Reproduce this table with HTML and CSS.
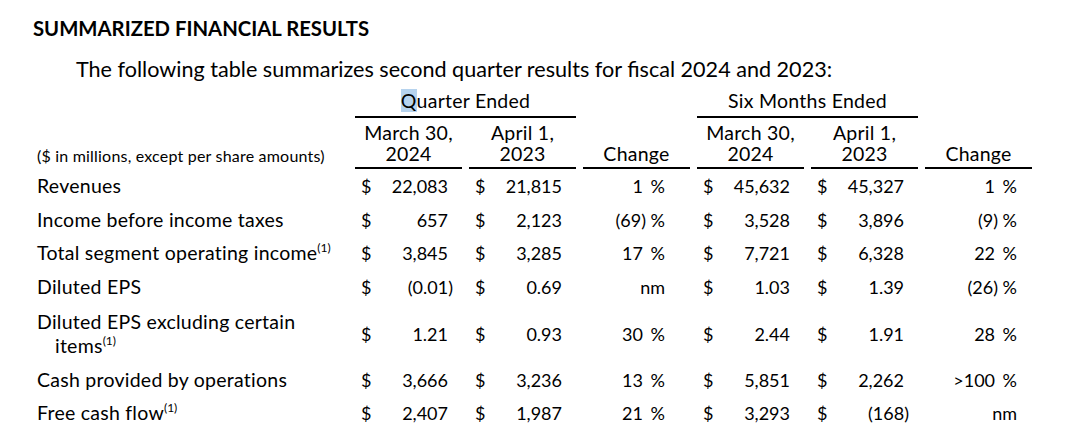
FILE: index.html
```html
<!DOCTYPE html>
<html lang="en">
<head>
<meta charset="utf-8">
<title>Summarized Financial Results</title>
<link rel="stylesheet" href="styles.css">
</head>
<body>
<div class="page">
  <h1 class="title">SUMMARIZED FINANCIAL RESULTS</h1>
  <p class="intro">The following table summarizes second quarter results for fiscal 2024 and 2023:</p>
  <table class="fin">
    <colgroup>
      <col class="c-label">
      <col class="c-data"><col class="c-data"><col class="c-data">
      <col class="c-data"><col class="c-data"><col class="c-data">
    </colgroup>
    <thead>
      <tr class="grp">
        <th></th>
        <th colspan="2" class="g"><span class="sel">Q</span>uarter Ended</th>
        <th></th>
        <th colspan="2" class="g">Six Months Ended</th>
        <th></th>
      </tr>
      <tr class="hd">
        <th class="unit">($ in millions, except per share amounts)</th>
        <th class="h">March 30,<br>2024</th>
        <th class="h">April 1,<br>2023</th>
        <th class="h">Change</th>
        <th class="h">March 30,<br>2024</th>
        <th class="h">April 1,<br>2023</th>
        <th class="h">Change</th>
      </tr>
    </thead>
    <tbody>
      <tr class="r34">
        <td class="lbl">Revenues</td>
        <td><div class="amt"><span>$</span><span>22,083</span></div></td>
        <td><div class="amt"><span>$</span><span>21,815</span></div></td>
        <td class="chg q"><span>1</span><span class="pct">%</span></td>
        <td><div class="amt"><span>$</span><span>45,632</span></div></td>
        <td><div class="amt"><span>$</span><span>45,327</span></div></td>
        <td class="chg s"><span>1</span><span class="pct">%</span></td>
      </tr>
      <tr class="r33">
        <td class="lbl">Income before income taxes</td>
        <td><div class="amt"><span>$</span><span>657</span></div></td>
        <td><div class="amt"><span>$</span><span>2,123</span></div></td>
        <td class="chg q"><span>(69<span class="cp">)</span></span><span class="pct">%</span></td>
        <td><div class="amt"><span>$</span><span>3,528</span></div></td>
        <td><div class="amt"><span>$</span><span>3,896</span></div></td>
        <td class="chg s"><span>(9<span class="cp">)</span></span><span class="pct">%</span></td>
      </tr>
      <tr class="r34">
        <td class="lbl">Total segment operating income<sup class="fn">(1)</sup></td>
        <td><div class="amt"><span>$</span><span>3,845</span></div></td>
        <td><div class="amt"><span>$</span><span>3,285</span></div></td>
        <td class="chg q"><span>17</span><span class="pct">%</span></td>
        <td><div class="amt"><span>$</span><span>7,721</span></div></td>
        <td><div class="amt"><span>$</span><span>6,328</span></div></td>
        <td class="chg s"><span>22</span><span class="pct">%</span></td>
      </tr>
      <tr class="r33">
        <td class="lbl">Diluted EPS</td>
        <td><div class="amt"><span>$</span><span>(0.01<span class="cp">)</span></span></div></td>
        <td><div class="amt"><span>$</span><span>0.69</span></div></td>
        <td class="chg q"><span>nm</span></td>
        <td><div class="amt"><span>$</span><span>1.03</span></div></td>
        <td><div class="amt"><span>$</span><span>1.39</span></div></td>
        <td class="chg s"><span>(26<span class="cp">)</span></span><span class="pct">%</span></td>
      </tr>
      <tr class="r61">
        <td class="lbl two">Diluted EPS excluding certain<br>items<sup class="fn">(1)</sup></td>
        <td><div class="amt"><span>$</span><span>1.21</span></div></td>
        <td><div class="amt"><span>$</span><span>0.93</span></div></td>
        <td class="chg q"><span>30</span><span class="pct">%</span></td>
        <td><div class="amt"><span>$</span><span>2.44</span></div></td>
        <td><div class="amt"><span>$</span><span>1.91</span></div></td>
        <td class="chg s"><span>28</span><span class="pct">%</span></td>
      </tr>
      <tr class="r32">
        <td class="lbl">Cash provided by operations</td>
        <td><div class="amt"><span>$</span><span>3,666</span></div></td>
        <td><div class="amt"><span>$</span><span>3,236</span></div></td>
        <td class="chg q"><span>13</span><span class="pct">%</span></td>
        <td><div class="amt"><span>$</span><span>5,851</span></div></td>
        <td><div class="amt"><span>$</span><span>2,262</span></div></td>
        <td class="chg s"><span>&gt;100</span><span class="pct">%</span></td>
      </tr>
      <tr class="r34">
        <td class="lbl">Free cash flow<sup class="fn">(1)</sup></td>
        <td><div class="amt"><span>$</span><span>2,407</span></div></td>
        <td><div class="amt"><span>$</span><span>1,987</span></div></td>
        <td class="chg q"><span>21</span><span class="pct">%</span></td>
        <td><div class="amt"><span>$</span><span>3,293</span></div></td>
        <td><div class="amt"><span>$</span><span>(168<span class="cp">)</span></span></div></td>
        <td class="chg s"><span>nm</span></td>
      </tr>
    </tbody>
  </table>
</div>
</body>
</html>
```

FILE: styles.css
```css
html, body {
  margin: 0;
  padding: 0;
  background: #ffffff;
}

body {
  font-family: Lato, "Liberation Sans", sans-serif;
  color: #000000;
}

.page {
  padding-top: 16px;
}

.title {
  margin: 0 0 0 33px;
  font-size: 20.3px;
  line-height: 24px;
  font-weight: 700;
}

.intro {
  margin: 17px 0 0 76px;
  font-size: 21.6px;
  line-height: 25px;
}

.fin {
  margin: 8px 0 0 30px;
  border-collapse: separate;
  border-spacing: 7px 0;
  table-layout: fixed;
  width: 1009px;
  font-size: 18px;
}

.c-label { width: 311px; }
.c-data { width: 107px; }

.fin th,
.fin td {
  padding: 0;
  font-weight: 400;
}

.grp th {
  font-size: 19.5px;
  letter-spacing: 0.25px;
  line-height: 22px;
  padding-bottom: 4px;
}

.grp .g {
  text-align: center;
  border-bottom: 2px solid #000;
}

.sel {
  background: #b6d3ee;
}

.hd th {
  font-size: 19.5px;
  letter-spacing: 0.25px;
  line-height: 21px;
  padding: 4px 0 3px;
  vertical-align: bottom;
}

.hd .h {
  text-align: center;
  border-bottom: 2px solid #000;
}

.hd .unit {
  text-align: left;
  font-size: 16px;
  letter-spacing: 0.2px;
}

.fin td {
  line-height: 24px;
  vertical-align: middle;
}

.r34 td { height: 34px; }
.r33 td { height: 33px; }
.r32 td { height: 32px; }
.r61 td { height: 61px; }

.lbl {
  white-space: nowrap;
  font-size: 19.5px;
  letter-spacing: 0.25px;
}

.lbl.two {
  padding-left: 18px;
  text-indent: -18px;
  white-space: normal;
}

.amt {
  display: flex;
  justify-content: space-between;
  padding: 0 14px 0 6px;
}

.amt .cp {
  margin-right: -5px;
}

.chg .cp {
  margin-right: -3px;
}

.chg {
  text-align: right;
  white-space: nowrap;
}

.chg.q { padding-right: 25px; }
.chg.s { padding-right: 15px; }

.pct {
  display: inline-block;
  width: 22px;
  text-align: right;
}

.fn {
  font-size: 12px;
  letter-spacing: 0;
  line-height: 0;
  vertical-align: 8px;
}
```
